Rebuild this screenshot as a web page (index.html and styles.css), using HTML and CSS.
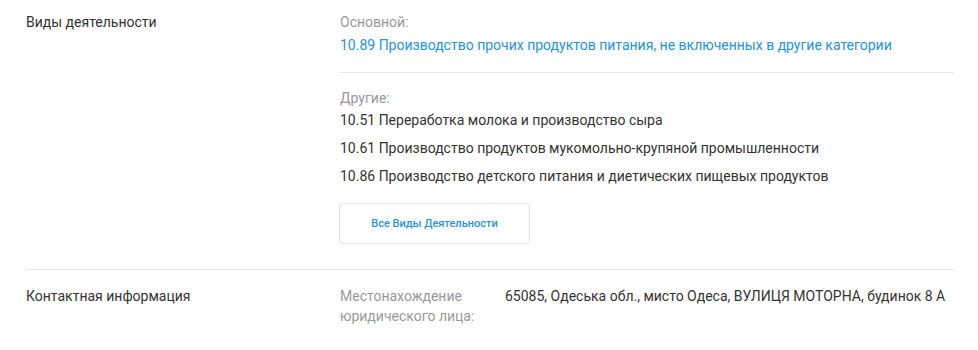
FILE: index.html
```html
<!DOCTYPE html>
<html lang="ru">
<head>
<meta charset="utf-8">
<link rel="stylesheet" href="styles.css">
</head>
<body>
<div class="page">
  <section class="row row-first">
    <div class="row-title">Виды деятельности</div>
    <div class="row-body">
      <div class="label">Основной:</div>
      <a class="link" href="#">10.89 Производство прочих продуктов питания, не включенных в другие категории</a>
      <hr class="inner-sep">
      <div class="label label-tight">Другие:</div>
      <ul class="acts">
        <li>10.51 Переработка молока и производство сыра</li>
        <li>10.61 Производство продуктов мукомольно-крупяной промышленности</li>
        <li>10.86 Производство детского питания и диетических пищевых продуктов</li>
      </ul>
      <button class="btn">Все Виды Деятельности</button>
    </div>
  </section>
  <section class="row row-contact">
    <div class="row-title">Контактная информация</div>
    <div class="row-body pair">
      <div class="pair-key">Местонахождение юридического лица:</div>
      <div class="pair-val">65085, Одеська обл., мисто Одеса, ВУЛИЦЯ МОТОРНА, будинок 8 А</div>
    </div>
  </section>
</div>
</body>
</html>
```
FILE: styles.css
```css
html, body {
  margin: 0;
  padding: 0;
  background: #fff;
}
body {
  font-family: Roboto, "Noto Sans", Arial, sans-serif;
  font-size: 14px;
  line-height: 20px;
  color: #333;
}
.page {
  padding: 0 24px 0 26px;
}
.row {
  display: flex;
}
.row-first {
  padding: 12px 0 25px;
  border-bottom: 1px solid #e6e6e6;
}
.row-contact {
  padding-top: 16px;
}
.row-title {
  width: 314px;
  flex: none;
  color: #333;
}
.row-body {
  flex: 1;
  min-width: 0;
}
.label {
  color: #999;
  margin-bottom: 3px;
}
.label-tight {
  margin-bottom: 2px;
}
.link {
  display: block;
  color: #2592e3;
  text-decoration: none;
}
.inner-sep {
  border: 0;
  border-top: 1px solid #e6e6e6;
  margin: 17px 0 15px;
}
.acts {
  list-style: none;
  margin: 0;
  padding: 0;
}
.acts li {
  margin-bottom: 8px;
}
.acts li:last-child {
  margin-bottom: 0;
}
.btn {
  display: block;
  margin: 17px 0 0 -1px;
  width: 191px;
  height: 41px;
  background: #fff;
  border: 1px solid #e3e3e3;
  border-radius: 3px;
  font-family: Roboto, "Noto Sans", Arial, sans-serif;
  font-size: 11px;
  font-weight: 500;
  color: #2592e3;
  padding: 0;
  cursor: pointer;
}
.pair {
  display: flex;
  gap: 15px;
}
.pair-key {
  width: 150px;
  flex: none;
  color: #999;
}
.pair-val {
  color: #333;
}
```
